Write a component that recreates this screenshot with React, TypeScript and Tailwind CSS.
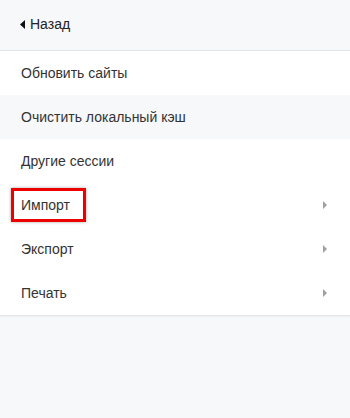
import React from "react";

const Tri = () => (
  <svg width="4" height="8" viewBox="0 0 4 8" className="shrink-0">
    <path d="M0 0 L4 4 L0 8 Z" fill="#a0a0a0" />
  </svg>
);

export default function App() {
  const rows: { label: string; arrow?: boolean; gray?: boolean; boxed?: boolean }[] = [
    { label: "Обновить сайты" },
    { label: "Очистить локальный кэш", gray: true },
    { label: "Другие сессии" },
    { label: "Импорт", arrow: true, boxed: true },
    { label: "Экспорт", arrow: true },
    { label: "Печать", arrow: true },
  ];
  return (
    <div
      className="w-[350px] h-[418px] bg-[#f7f8fa] flex flex-col text-[14px] text-[#333]"
      style={{ fontFamily: '"Liberation Sans", Arial, sans-serif' }}
    >
      <div className="h-[51px] shrink-0 flex items-center pl-[20px] pb-[1px] border-b border-[#e3e4e6] text-[#222]">
        <svg width="5" height="9" viewBox="0 0 5 9" className="mr-[5px]">
          <path d="M5 0 L0 4.5 L5 9 Z" fill="#111" />
        </svg>
        <span>Назад</span>
      </div>
      <div className="flex flex-col bg-white border-b border-[#e3e4e6] shadow-[0_1px_2px_rgba(0,0,0,0.04)]">
        {rows.map((r) => (
          <div
            key={r.label}
            className={`h-[44px] flex items-center justify-between pl-[21px] pr-[23px] ${r.gray ? "bg-[#f7f8fa]" : "bg-white"}`}
          >
            {r.boxed ? (
              <span className="relative">
                <span>{r.label}</span>
                <span className="absolute left-[-10px] right-[-16px] top-[-7px] bottom-[-6px] border-[3px] border-[#ee0000] shadow-[0_0_3px_rgba(0,0,0,0.35)]" />
              </span>
            ) : (
              <span>{r.label}</span>
            )}
            {r.arrow && <Tri />}
          </div>
        ))}
      </div>
    </div>
  );
}
